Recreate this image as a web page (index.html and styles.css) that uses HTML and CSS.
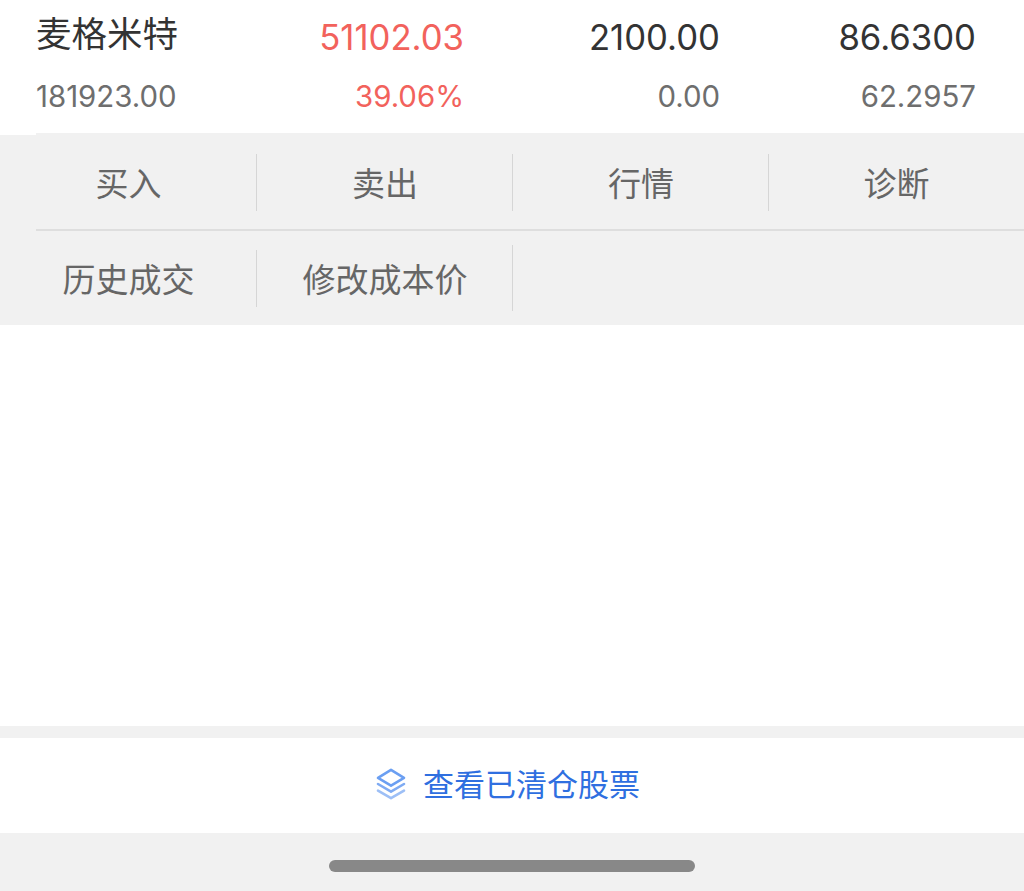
FILE: index.html
```html
<!DOCTYPE html>
<html lang="zh-CN">
<head>
    <meta charset="UTF-8">
    <meta name="viewport" content="width=device-width, initial-scale=1.0">
    <title>持仓</title>
    <link rel="stylesheet" href="styles.css">
</head>
<body>
    <div class="stock">
        <div class="stock-row main">
            <div class="name">麦格米特</div>
            <div class="red">51102.03</div>
            <div>2100.00</div>
            <div>86.6300</div>
        </div>
        <div class="stock-row sub">
            <div class="name">181923.00</div>
            <div class="red">39.06%</div>
            <div>0.00</div>
            <div>62.2957</div>
        </div>
    </div>

    <div class="actions">
        <div class="action-row first">
            <div class="action sep">买入</div>
            <div class="action sep">卖出</div>
            <div class="action sep">行情</div>
            <div class="action">诊断</div>
        </div>
        <div class="action-row second">
            <div class="action sep">历史成交</div>
            <div class="action sep tall">修改成本价</div>
            <div class="action"></div>
            <div class="action"></div>
        </div>
    </div>

    <div class="empty"></div>

    <div class="cleared">
        <svg class="cleared-icon" width="30" height="32" viewBox="0 0 30 32" fill="none" stroke-width="2.6" stroke-linejoin="round" stroke-linecap="round">
            <path d="M15 1.8 28 9.8 15 17.6 2 9.8Z" stroke="#6b9ff2"/>
            <path d="M2 16 15 23.6 28 16" stroke="#7fabf3"/>
            <path d="M2 22.6 15 30.2 28 22.6" stroke="#9dbff6"/>
        </svg>
        <span class="cleared-label">查看已清仓股票</span>
    </div>

    <div class="home-area">
        <div class="home-bar"></div>
    </div>
</body>
</html>
```

FILE: styles.css
```css
* {
    box-sizing: border-box;
}
body {
    margin: 0;
    height: 891px;
    overflow: hidden;
    background: #fff;
    font-family: Inter, "Noto Sans CJK SC", sans-serif;
}
.stock {
    height: 133px;
    padding: 0 48px 0 36px;
}
.stock-row {
    display: grid;
    grid-template-columns: 172px 256px 256px 256px;
    text-align: right;
}
.stock-row .name {
    text-align: left;
}
.main {
    height: 74px;
    padding-top: 16px;
    font-size: 34.7px;
    line-height: 42px;
    color: #333;
}
.main .name {
    font-size: 35.5px;
    margin-top: -2px;
}
.sub {
    font-size: 29.4px;
    line-height: 46px;
    color: #6e6e6e;
}
.red {
    color: #f2625c;
}
.actions {
    position: relative;
    height: 192px;
    background: #f1f1f1;
}
/* small white notch left of the row divider */
.actions::before {
    content: "";
    position: absolute;
    left: 0;
    top: 0;
    width: 36px;
    height: 2px;
    background: #fff;
}
.action-row {
    display: grid;
    grid-template-columns: 257px 256px 256px 255px;
    font-size: 33px;
    color: #666;
}
.first {
    height: 97px;
    position: relative;
}
.first::after {
    content: "";
    position: absolute;
    left: 36px;
    right: 0;
    bottom: -1px;
    height: 2px;
    background: #dedede;
}
.second {
    height: 95px;
}
.action {
    display: flex;
    align-items: center;
    justify-content: center;
}
.sep {
    background: linear-gradient(#d6d6d6, #d6d6d6) right 21px / 1px 57px no-repeat;
}
.second .sep {
    background-position: right 20px;
}
.second .tall {
    background-position: right 15px;
    background-size: 1px 66px;
}
.empty {
    height: 401px;
}
.cleared {
    height: 107px;
    border-top: 12px solid #f1f1f1;
    display: flex;
    align-items: center;
    justify-content: center;
    gap: 17px;
    color: #2f6fe0;
    font-size: 31px;
    padding-right: 8px;
    padding-bottom: 3px;
}
.cleared-label {
    margin-bottom: 4px;
}
.home-area {
    height: 58px;
    background: #f1f1f1;
    padding-top: 27px;
}
.home-bar {
    width: 366px;
    height: 12px;
    margin: 0 auto;
    border-radius: 6px;
    background: #888;
}
```
